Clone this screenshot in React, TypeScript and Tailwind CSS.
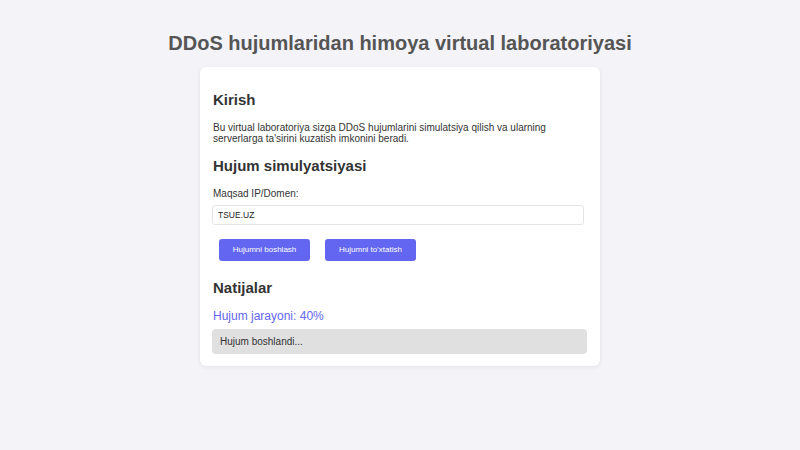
import React from 'react';

export default function App() {
  return (
    <div className="min-h-screen w-full bg-[#f3f3f8] pt-[31px] font-['Liberation_Sans',Arial,sans-serif]">
      <h1 className="text-center text-[20px] leading-[24px] font-bold text-[#555555]">
        DDoS hujumlaridan himoya virtual laboratoriyasi
      </h1>

      <div className="mx-auto mt-[12px] w-[400px] rounded-[6px] bg-white pl-[12px] pr-[13px] pt-[23px] pb-[12px] shadow-[0_1px_4px_rgba(0,0,0,0.08)]">
        {/* Kirish */}
        <h2 className="pl-[1px] text-[15px] leading-[20px] font-bold text-[#333333]">Kirish</h2>
        <p className="mt-[12px] pl-[1px] text-[10px] leading-[11px] text-[#333333]">
          Bu virtual laboratoriya sizga DDoS hujumlarini simulatsiya qilish va ularning
          <br />
          serverlarga ta'sirini kuzatish imkonini beradi.
        </p>

        {/* Simulyatsiya */}
        <h2 className="mt-[12px] pl-[1px] text-[15px] leading-[20px] font-bold text-[#333333]">
          Hujum simulyatsiyasi
        </h2>
        <label className="mt-[12px] block pl-[1px] text-[10px] leading-[12px] text-[#333333]">
          Maqsad IP/Domen:
        </label>
        <div className="mt-[5px] flex h-[20px] w-[372px] items-center rounded-[3px] border border-[#e4e4e4] bg-white pl-[5px] text-[8.5px] text-[#222222]">
          TSUE.UZ
        </div>
        <div className="mt-[14px] ml-[7px] flex gap-[15px]">
          <button className="h-[22px] w-[91px] rounded-[3px] bg-[#6366f1] text-[8px] text-white">
            Hujumni boshlash
          </button>
          <button className="h-[22px] w-[91px] rounded-[3px] bg-[#6366f1] text-[8px] text-white">
            Hujumni to'xtatish
          </button>
        </div>

        {/* Natijalar */}
        <h2 className="mt-[17px] pl-[1px] text-[15px] leading-[20px] font-bold text-[#333333]">Natijalar</h2>
        <div className="mt-[11px] pl-[1px] text-[12px] leading-[14px] text-[#6366f1]">Hujum jarayoni: 40%</div>
        <div className="mt-[6px] flex h-[25px] items-center rounded-[4px] bg-[#e0e0e0] pl-[8px] text-[10px] text-[#333333]">
          Hujum boshlandi...
        </div>
      </div>
    </div>
  );
}
